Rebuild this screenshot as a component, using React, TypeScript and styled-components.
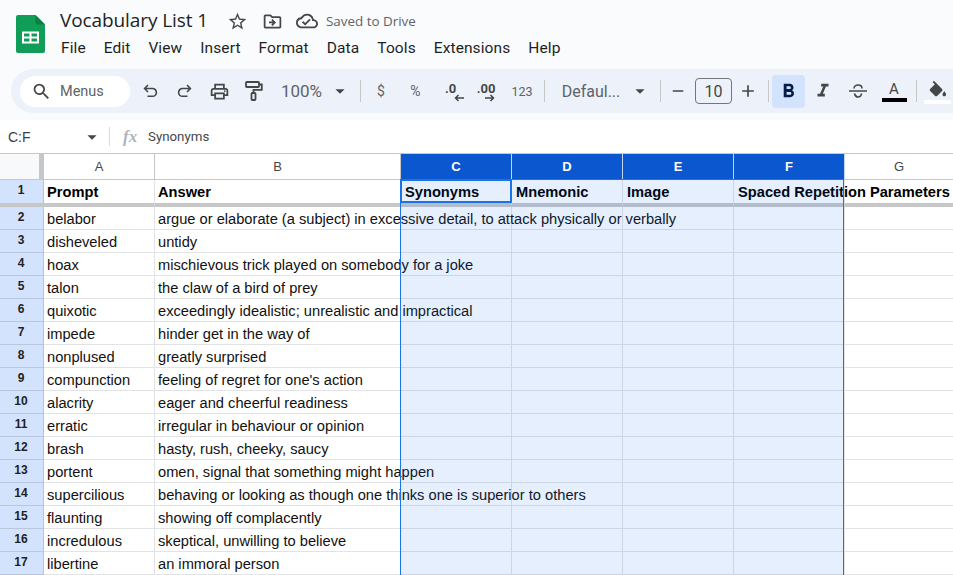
import React from "react";
import styled, { createGlobalStyle } from "styled-components";
import {
  MdSearch, MdOutlinePrint, MdArrowDropDown, MdStarBorder,
  MdOutlineDriveFileMove, MdOutlineCloudDone, MdRemove, MdAdd, MdFormatBold, MdFormatItalic,
} from "react-icons/md";

const Global = createGlobalStyle`
  html, body { margin: 0; padding: 0; width: 953px; height: 575px; overflow: hidden; background: #f9fbfd; }
  * { box-sizing: border-box; }
`;
const Page = styled.div`
  width: 953px; height: 575px; overflow: hidden; display: flex; flex-direction: column;
  font-family: "Roboto", "Liberation Sans", sans-serif; color: #1f1f1f; background: #f9fbfd;
`;
const Header = styled.header`
  height: 69px; display: flex; padding: 15px 0 0 16px; flex: none;
`;
const Titles = styled.div`display: flex; flex-direction: column; margin-left: 15px; margin-top: -8px;`;
const TitleRow = styled.div`display: flex; align-items: center; height: 26px;`;
const DocName = styled.div`
  font: 400 19px/24px "Open Sans", sans-serif; width: 159.5px; letter-spacing: -0.1px; white-space: nowrap;
`;
const TitleIcon = styled.span<{ $w: number }>`
  width: ${p => p.$w}px; display: flex; justify-content: center; color: #444746; flex: none; padding-top: 2px;
`;
const Saved = styled.span`font: 400 13.4px/20px "Open Sans", sans-serif; color: #5f6368; margin-left: 1.5px; padding-top: 2px;`;
const MenuBar = styled.nav`display: flex; gap: 18px; margin: 5px 0 0 1px; font: 400 15.5px/20px "Roboto", sans-serif; letter-spacing: 0.1px;`;
const Toolbar = styled.div`
  flex: none; height: 44px; margin-left: 11px; display: flex; align-items: center; background: #edf2fa;
  border-radius: 22px 0 0 22px; padding-left: 9px; color: #444746; overflow: hidden;
`;
const SearchPill = styled.div`
  width: 110px; height: 31px; border-radius: 16px; background: #fff; display: flex; align-items: center;
  padding-left: 11px; gap: 8px; font: 400 14.5px "Roboto", sans-serif; color: #5f6368; flex: none; margin-right: 3px;
`;
const Tool = styled.div<{ $w?: number }>`
  width: ${p => p.$w ?? 34.5}px; height: 34px; flex: none; display: flex; align-items: center; justify-content: center;
  svg { flex: none; }
`;
const ToolText = styled(Tool)<{ $size?: number }>`
  font: 400 ${p => p.$size ?? 14}px "Roboto", sans-serif; color: #5f6368;
`;
const Divider = styled.div<{ $l: number; $r: number }>`
  width: 1px; height: 22px; background: #c7c7c7; flex: none; margin: 0 ${p => p.$r}px 0 ${p => p.$l}px;
`;
const Stack = styled.div`
  display: flex; flex-direction: column; align-items: flex-end; font: 700 13px/11px "Roboto", sans-serif; color: #444746; padding-top: 2px;
`;
const SizeBox = styled.div`
  width: 37px; height: 26px; border: 1px solid #747775; border-radius: 4px; display: flex; align-items: center; justify-content: center;
  font: 400 16px "Roboto", sans-serif; color: #444746; flex: none;
`;
const BoldButton = styled.div`
  width: 33px; height: 33px; background: #d3e3fd; border-radius: 4px; display: flex; align-items: center; justify-content: center;
  color: #041e49; flex: none;
`;
const ColorBar = styled.span<{ $c: string; $w: number }>`display: block; width: ${p => p.$w}px; height: 4px; background: ${p => p.$c}; flex: none;`;
const ColorTool = styled(Tool)`flex-direction: column; gap: 1px; padding-top: 2px;`;
const LetterA = styled.span`font: 400 15px/15px "Roboto", sans-serif; color: #444746;`;
const FormulaBar = styled.div`
  flex: none; height: 34px; margin-top: 7px; background: #fff; display: flex; align-items: center; border-bottom: 1px solid #c7c7c7;
  font: 400 14px "Liberation Sans", sans-serif;
`;
const NameBox = styled.div`
  width: 109px; padding-left: 8px; display: flex; align-items: center; justify-content: space-between; padding-right: 6px; color: #3c4043;
`;
const FxDivider = styled.div`width: 1px; height: 19px; background: #dadce0;`;
const Fx = styled.span`font: italic 700 17px "Liberation Serif", serif; color: #b0b4b8; margin-left: 13px; width: 25px;`;
const FormulaText = styled.span`font: 400 13.3px "Roboto", sans-serif; color: #444746;`;
const SheetWrap = styled.div`position: relative; flex: 1; background: #fff; overflow: hidden;`;
const Grid = styled.div`
  display: grid; grid-template-columns: 44px 111px 246px 111px 111px 111px 111px 109px; grid-template-rows: 26px 27px repeat(16, 23px);
  font: 400 14.67px/22px "Liberation Sans", sans-serif; color: #111;
`;
const Corner = styled.div`background: #f8f9fa; border-right: 5px solid #c7c7c7; border-bottom: 1px solid #c7c7c7;`;
const ColHead = styled.div<{ $sel?: boolean }>`
  display: flex; align-items: center; justify-content: center; font: ${p => (p.$sel ? 700 : 400)} 13px "Liberation Sans", sans-serif;
  background: ${p => (p.$sel ? "#0b57d0" : "#fff")}; color: ${p => (p.$sel ? "#fff" : "#444746")};
  border-right: 1px solid ${p => (p.$sel ? "#c2d6f3" : "#c7c7c7")}; border-bottom: 1px solid #c7c7c7;
`;
const RowHead = styled.div<{ $frozen?: boolean }>`
  background: #d3e3fd; color: #1f1f1f; font: 700 12px/21px "Liberation Sans", sans-serif; text-align: center; padding-right: 1px;
  border-right: 1px solid #b6c4da; border-bottom: ${p => (p.$frozen ? "4px solid #c7c7c7" : "1px solid #b9c7dc")};
`;
const Cell = styled.div<{ $frozen?: boolean; $pad?: number }>`
  padding-left: ${p => p.$pad ?? 3}px; white-space: nowrap; min-width: 0;
  border-right: 1px solid #e1e3e6; border-bottom: ${p => (p.$frozen ? "4px solid #c7c7c7" : "1px solid #e1e3e6")};
  font-weight: ${p => (p.$frozen ? 700 : 400)}; color: ${p => (p.$frozen ? "#000" : "#111")};
  line-height: 24px;
`;
const CellText = styled.span`position: relative; z-index: 1;`;
const Selection = styled.div`
  position: absolute; z-index: 2; left: 400px; top: 25px; width: 444px; bottom: 0; pointer-events: none;
  background: rgba(14, 101, 235, 0.1); border: solid #1a73e8; border-width: 1px 1px 0 1px;
`;
const ActiveCell = styled.div`
  position: absolute; z-index: 3; left: 400px; top: 25px; width: 112px; height: 24px; border: 2px solid #1a73e8; pointer-events: none;
`;

const rows: [string, string][] = [
  ["belabor", "argue or elaborate (a subject) in excessive detail, to attack physically or verbally"],
  ["disheveled", "untidy"],
  ["hoax", "mischievous trick played on somebody for a joke"],
  ["talon", "the claw of a bird of prey"],
  ["quixotic", "exceedingly idealistic; unrealistic and impractical"],
  ["impede", "hinder get in the way of"],
  ["nonplused", "greatly surprised"],
  ["compunction", "feeling of regret for one's action"],
  ["alacrity", "eager and cheerful readiness"],
  ["erratic", "irregular in behaviour or opinion"],
  ["brash", "hasty, rush, cheeky, saucy"],
  ["portent", "omen, signal that something might happen"],
  ["supercilious", "behaving or looking as though one thinks one is superior to others"],
  ["flaunting", "showing off complacently"],
  ["incredulous", "skeptical, unwilling to believe"],
  ["libertine", "an immoral person"],
];
const headers = ["Prompt", "Answer", "Synonyms", "Mnemonic", "Image", "Spaced Repetition Parameters", ""];
const letters = ["A", "B", "C", "D", "E", "F", "G"];

const SheetsLogo = () => (
  <svg width="29" height="38" viewBox="0 0 29 38">
    <path d="M2 0h17.5L29 9.500V36a2 2 0 0 1-2 2H2a2 2 0 0 1-2-2V2a2 2 0 0 1 2-2z" fill="#0f9d58" />
    <path d="M19.500 0 29 9.500h-7.500a2 2 0 0 1-2-2z" fill="#0b8043" />
    <path d="M6 16.500h17v12H6z M8 18.500v3h5.500v-3z M15.500 18.500v3H21v-3z M8 23.500v3h5.500v-3z M15.500 23.500v3H21v-3z" fill="#fff" fillRule="evenodd" />
  </svg>
);
const UndoIcon = ({ flip }: { flip?: boolean }) => (
  <svg width="15" height="14" viewBox="0 0 15 14" fill="none" stroke="#444746" strokeWidth="1.6" style={flip ? { transform: "scaleX(-1)" } : undefined}>
    <path d="M5 1 1.600 4.500 5 8M1.600 4.500H9.500a3.800 3.800 0 0 1 0 7.800H4.500" />
  </svg>
);
const PaintIcon = () => (
  <svg width="18" height="20" viewBox="0 0 18 20" fill="none" stroke="#444746" strokeWidth="1.800">
    <rect x="1" y="1" width="13" height="5" rx="0.800" />
    <path d="M14 3.500h2.800v5.300H8.500v2.700" />
    <rect x="6.500" y="12" width="4" height="7" rx="0.800" />
  </svg>
);
const SmallArrow = ({ left }: { left?: boolean }) => (
  <svg width="10" height="8" viewBox="0 0 10 8" fill="none" stroke="#444746" strokeWidth="1.500" style={left ? { transform: "scaleX(-1)", marginRight: -8 } : undefined}>
    <path d="M0 4h8.500M5.500 1l3 3-3 3" />
  </svg>
);
const StrikeIcon = () => (
  <svg width="20" height="16" viewBox="0 0 20 16" fill="none" stroke="#444746" strokeWidth="1.600">
    <path d="M1 8h18" />
    <path d="M6 5.500C6 3 8 2 10 2s4 1 4 3.500" />
    <path d="M6.500 10.500c.4 2 1.800 3.500 3.500 3.500s3.200-1 3.500-3.500" />
  </svg>
);
const FillIcon = () => (
  <svg width="20" height="19" viewBox="0 0 22 19" fill="#444746">
    <path d="M16.560 8.940 7.620 0 6.210 1.410l2.380 2.380-5.150 5.150c-.59.59-.59 1.540 0 2.120l5.500 5.500c.29.29.68.44 1.060.44s.77-.15 1.060-.44l5.500-5.500c.59-.58.59-1.530 0-2.120z" />
    <path d="M19 11.500s-2 2.170-2 3.500c0 1.100.9 2 2 2s2-.9 2-2c0-1.330-2-3.500-2-3.500z" />
  </svg>
);

export default function App() {
  return (
    <Page>
      <Global />
      <Header>
        <SheetsLogo />
        <Titles>
          <TitleRow>
            <DocName>Vocabulary List 1</DocName>
            <TitleIcon $w={35}><MdStarBorder size={21} /></TitleIcon>
            <TitleIcon $w={35}><MdOutlineDriveFileMove size={21} /></TitleIcon>
            <TitleIcon $w={35}><MdOutlineCloudDone size={22} /></TitleIcon>
            <Saved>Saved to Drive</Saved>
          </TitleRow>
          <MenuBar>
            {["File", "Edit", "View", "Insert", "Format", "Data", "Tools", "Extensions", "Help"].map(m => <span key={m}>{m}</span>)}
          </MenuBar>
        </Titles>
      </Header>
      <Toolbar>
        <SearchPill><MdSearch size={21} color="#444746" /><span>Menus</span></SearchPill>
        <Tool><UndoIcon /></Tool>
        <Tool><UndoIcon flip /></Tool>
        <Tool><MdOutlinePrint size={21} /></Tool>
        <Tool><PaintIcon /></Tool>
        <ToolText $w={61} $size={17}>100%</ToolText>
        <Tool $w={16}><MdArrowDropDown size={22} /></Tool>
        <Divider $l={12} $r={3} />
        <ToolText $w={34}>$</ToolText>
        <ToolText $w={35}>%</ToolText>
        <Tool $w={35}><Stack><span>.0</span><SmallArrow left /></Stack></Tool>
        <Tool $w={36}><Stack><span>.00</span><SmallArrow /></Stack></Tool>
        <ToolText $w={36} $size={12.5}>123</ToolText>
        <Divider $l={4} $r={12} />
        <ToolText $w={68} $size={16}>Defaul...</ToolText>
        <Tool $w={30}><MdArrowDropDown size={22} /></Tool>
        <Divider $l={5} $r={0} />
        <Tool $w={34}><MdRemove size={18} /></Tool>
        <SizeBox>10</SizeBox>
        <Tool $w={32}><MdAdd size={20} /></Tool>
        <Divider $l={4} $r={3} />
        <BoldButton><MdFormatBold size={23} /></BoldButton>
        <Tool $w={36}><MdFormatItalic size={22} /></Tool>
        <Tool $w={34}><StrikeIcon /></Tool>
        <ColorTool $w={38}><LetterA>A</LetterA><ColorBar $c="#000" $w={25} /></ColorTool>
        <Divider $l={3} $r={0} />
        <ColorTool $w={40}><FillIcon /><ColorBar $c="#fff" $w={27} /></ColorTool>
      </Toolbar>
      <FormulaBar>
        <NameBox>C:F<MdArrowDropDown size={22} color="#444746" /></NameBox>
        <FxDivider />
        <Fx>fx</Fx>
        <FormulaText>Synonyms</FormulaText>
      </FormulaBar>
      <SheetWrap>
        <Grid>
          <Corner />
          {letters.map((l, i) => <ColHead key={l} $sel={i >= 2 && i <= 5}>{l}</ColHead>)}
          <RowHead $frozen>1</RowHead>
          {headers.map((h, i) => <Cell key={i} $frozen $pad={i >= 2 && i <= 5 ? 4 : 3}><CellText>{h}</CellText></Cell>)}
          {rows.map((r, i) => (
            <React.Fragment key={r[0]}>
              <RowHead>{i + 2}</RowHead>
              <Cell><CellText>{r[0]}</CellText></Cell>
              <Cell><CellText>{r[1]}</CellText></Cell>
              {[0, 1, 2, 3, 4].map(c => <Cell key={c} />)}
            </React.Fragment>
          ))}
        </Grid>
        <Selection />
        <ActiveCell />
      </SheetWrap>
    </Page>
  );
}
